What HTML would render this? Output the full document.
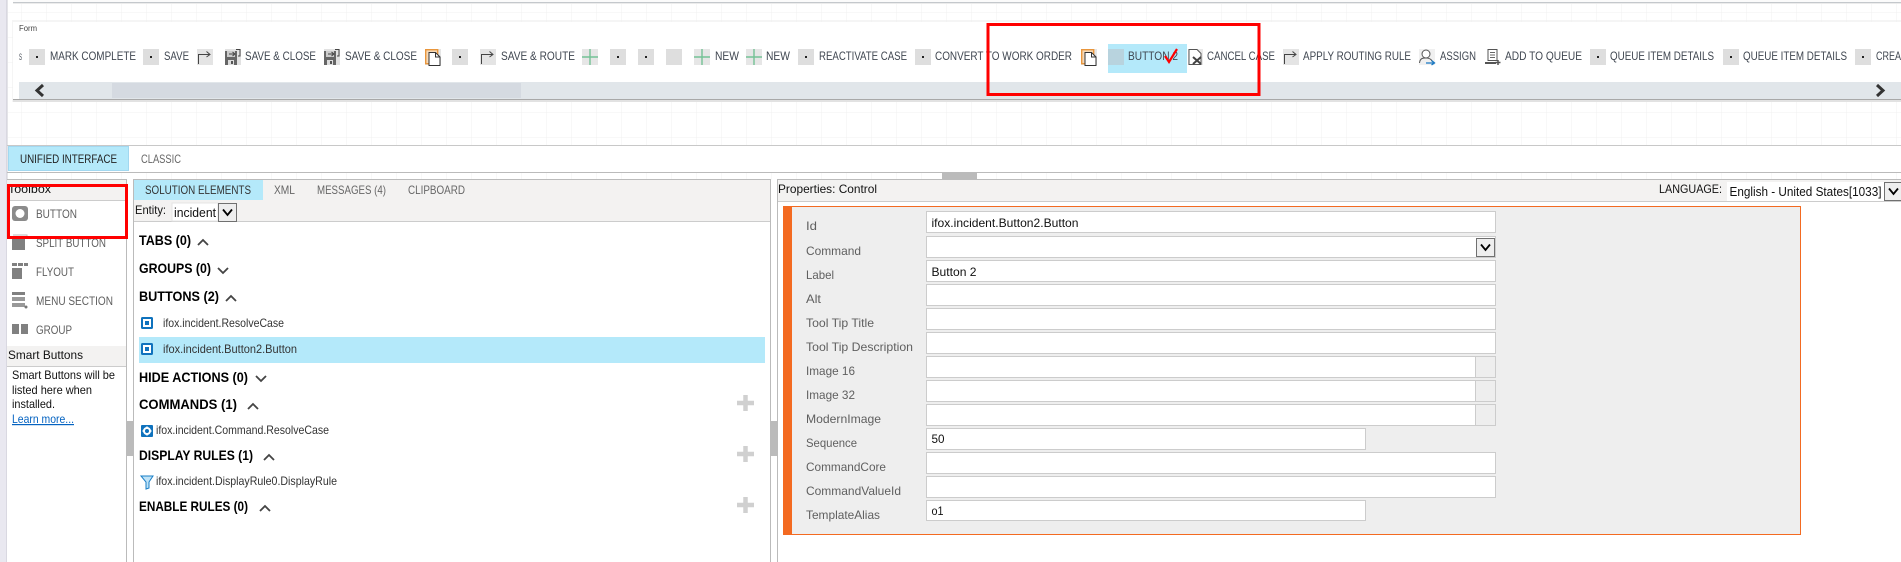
<!DOCTYPE html>
<html><head><meta charset="utf-8"><style>
html,body{margin:0;padding:0;background:#fff;width:1901px;height:562px;overflow:hidden}
svg{display:block}
text{font-family:"Liberation Sans",sans-serif;font-size:12px;fill:#444}
.t text,text.t{fill:#3f4650}
.g{fill:#5f5f5f}
.k{fill:#111}
.h{font-weight:bold;font-size:14px;fill:#000}
.in{fill:#fff;stroke:#ccc;stroke-width:1}
.chev{fill:none;stroke:#444;stroke-width:1.8}
</style></head><body>
<svg width="1901" height="562" viewBox="0 0 1901 562" xmlns="http://www.w3.org/2000/svg" shape-rendering="geometricPrecision">
<defs>
<pattern id="grid" x="21" y="12" width="25" height="25" patternUnits="userSpaceOnUse"><path d="M0 0V25M0 0H25" stroke="#f1f1f1" stroke-width="1" fill="none"/></pattern>
<g id="sq"><rect width="16" height="16" fill="#dedede"/><rect x="7" y="7" width="2" height="2" fill="#222"/></g>
<g id="route"><rect width="16" height="16" fill="#e4e4e4"/><path d="M1.5 15V5.5H12M9.5 2.5L13 5.5L9.5 8" fill="none" stroke="#444" stroke-width="1"/></g>
<g id="save"><rect width="16" height="16" fill="#e2e2e2"/><rect y="2" width="12" height="14" fill="#666"/><rect x="3" y="11" width="6" height="5" fill="#ddd"/><rect x="6" y="12" width="2" height="3" fill="#555"/><rect x="2" y="2" width="8" height="6" fill="#ccc"/><path d="M4 5H9M7.5 3L10 5L7.5 7M11 0.5H15V7H13" fill="none" stroke="#444" stroke-width="1"/></g>
<g id="copy"><rect width="16" height="16" fill="#e6e6e6"/><rect x=".7" y=".7" width="12" height="14" fill="#f6d9b8" stroke="#e9963c" stroke-width="1.4"/><path d="M4 3.500H10.500L15 8V16.500H4Z" fill="#fff" stroke="#333" stroke-width="1"/><path d="M10.500 3.500V8H15" fill="none" stroke="#333" stroke-width="1"/></g>
<g id="plus"><rect width="16" height="16" fill="#e6e6e6"/><path d="M8 0V16M0 8H16" stroke="#74c295" stroke-width="1.4"/></g>
<g id="blue"><rect width="12" height="12" rx="1.5" fill="#0f72bd"/><rect x="2" y="2" width="8" height="8" fill="#fff"/><rect x="4" y="4" width="4" height="4" fill="#0f72bd"/></g>
<g id="sel"><rect width="18" height="18" fill="#eee" stroke="#707070"/><path d="M4.5 6L9 11.5L13.5 6" fill="none" stroke="#000" stroke-width="1.8"/></g>
<g id="bigplus"><path d="M8.5 0V16M0 8H17" stroke="#d0d0d0" stroke-width="4.5"/></g>
</defs>

<rect x="7" width="1894" height="172" fill="#fff"/>
<rect x="8" width="1893" height="145" fill="url(#grid)"/>
<rect x="8" y="172" width="1893" height="8" fill="url(#grid)"/>
<rect width="7" height="562" fill="#e9e8f0"/>
<rect x="6.500" width="1" height="562" fill="#c9c9d2"/>

<!-- top panel remnant -->
<rect x="13" y="0" width="1888" height="2" fill="#fbfbfb"/>
<rect x="13" y="2" width="1888" height="1" fill="#c4c8cc"/>
<rect x="13" y="3" width="1888" height="1" fill="#ececec"/>

<!-- form panel -->
<rect x="12" y="20" width="1889" height="82" fill="#eee" opacity=".6"/>
<rect x="13" y="22" width="1888" height="77" fill="#fff"/>
<rect x="13" y="99" width="1888" height="1" fill="#a8a8a8"/>
<rect x="13" y="100" width="1888" height="2" fill="#e2e2e2"/>
<text x="19" y="31" style="font-size:8px" textLength="18" lengthAdjust="spacingAndGlyphs">Form</text>
<rect x="19" y="82" width="1882" height="17" fill="#e1e6ea"/>
<rect x="112" y="83" width="409" height="15" fill="#d5dae1"/>
<path d="M43 85L37 90.500L43 96" fill="none" stroke="#333" stroke-width="3"/>
<path d="M1877 85L1883 90.500L1877 96" fill="none" stroke="#333" stroke-width="3"/>

<g class="t">
<text x="19" y="60" textLength="3" lengthAdjust="spacingAndGlyphs" style="font-size:9px">S</text>
<use href="#sq" x="29" y="49"/><text x="50" y="60" textLength="86" lengthAdjust="spacingAndGlyphs">MARK COMPLETE</text>
<use href="#sq" x="143" y="49"/><text x="164" y="60" textLength="25" lengthAdjust="spacingAndGlyphs">SAVE</text>
<use href="#route" x="197" y="49"/>
<use href="#save" x="225" y="49"/><text x="245" y="60" textLength="71" lengthAdjust="spacingAndGlyphs">SAVE &amp; CLOSE</text>
<use href="#save" x="324" y="49"/><text x="345" y="60" textLength="72" lengthAdjust="spacingAndGlyphs">SAVE &amp; CLOSE</text>
<use href="#copy" x="425" y="49"/>
<use href="#sq" x="452" y="49"/>
<use href="#route" x="480" y="49"/><text x="501" y="60" textLength="74" lengthAdjust="spacingAndGlyphs">SAVE &amp; ROUTE</text>
<use href="#plus" x="582" y="49"/>
<use href="#sq" x="610" y="49"/>
<use href="#sq" x="638" y="49"/>
<rect x="666" y="49" width="16" height="16" fill="#dedede"/>
<use href="#plus" x="694" y="49"/><text x="715" y="60" textLength="24" lengthAdjust="spacingAndGlyphs">NEW</text>
<use href="#plus" x="746" y="49"/><text x="766" y="60" textLength="24" lengthAdjust="spacingAndGlyphs">NEW</text>
<use href="#sq" x="798" y="49"/><text x="819" y="60" textLength="88" lengthAdjust="spacingAndGlyphs">REACTIVATE CASE</text>
<use href="#sq" x="915" y="49"/><text x="935" y="60" textLength="137" lengthAdjust="spacingAndGlyphs">CONVERT TO WORK ORDER</text>
<use href="#copy" x="1081" y="49"/>
<rect x="1108" y="44" width="79" height="29" fill="#b4e9fa"/>
<rect x="1108" y="49" width="16" height="16" fill="#b8d3de"/>
<text x="1128" y="60" textLength="50" lengthAdjust="spacingAndGlyphs">BUTTON 2</text>
<path d="M1165 56L1169 62L1177 49" fill="none" stroke="#f00" stroke-width="2.200"/>
<g transform="translate(1188,49)"><rect width="15" height="16" fill="#e8e8e8"/><path d="M1 .5H9L13 4.500V15.500H1Z" fill="#fff" stroke="#555"/><path d="M5 8L13 15M13 8L5 15" stroke="#444" stroke-width="2"/></g>
<text x="1207" y="60" textLength="68" lengthAdjust="spacingAndGlyphs">CANCEL CASE</text>
<use href="#route" x="1283" y="49"/><text x="1303" y="60" textLength="108" lengthAdjust="spacingAndGlyphs">APPLY ROUTING RULE</text>
<g transform="translate(1419,49)"><rect width="16" height="16" fill="#f0f0f0"/><circle cx="7" cy="5" r="4" fill="#fff" stroke="#555"/><path d="M.5 14C1 9 4 9 7 9S12 10 13 12" fill="none" stroke="#555"/><path d="M7 14H15M12.500 11.500L15.500 14L12.500 16" fill="none" stroke="#1a78c2" stroke-width="1.300"/></g>
<text x="1440" y="60" textLength="36" lengthAdjust="spacingAndGlyphs">ASSIGN</text>
<g transform="translate(1485,49)"><rect x="3" y=".5" width="9" height="11" fill="#fff" stroke="#555"/><path d="M5 3.500H10M5 6H10M5 8.500H10" stroke="#666"/><rect y="13" width="11" height="2" fill="#555"/><path d="M13 11V16M10.500 13.500H15.500" stroke="#555" stroke-width="1.500"/></g>
<text x="1505" y="60" textLength="77" lengthAdjust="spacingAndGlyphs">ADD TO QUEUE</text>
<use href="#sq" x="1590" y="49"/><text x="1610" y="60" textLength="104" lengthAdjust="spacingAndGlyphs">QUEUE ITEM DETAILS</text>
<use href="#sq" x="1723" y="49"/><text x="1743" y="60" textLength="104" lengthAdjust="spacingAndGlyphs">QUEUE ITEM DETAILS</text>
<use href="#sq" x="1855" y="49"/><text x="1876" y="60" textLength="25" lengthAdjust="spacingAndGlyphs">CREA</text>
</g>
<rect x="988" y="24.500" width="271" height="70" fill="none" stroke="#f00" stroke-width="3"/>

<!-- tabs -->
<rect x="7" y="145" width="1894" height="1" fill="#c8c8c8"/>
<rect x="8" y="146" width="1893" height="26" fill="#fff"/>
<rect x="8.500" y="146.500" width="120" height="24" fill="#b4e9fa" stroke="#a2d8f0"/>
<text x="20" y="163" style="fill:#222" textLength="97" lengthAdjust="spacingAndGlyphs">UNIFIED INTERFACE</text>
<text x="141" y="163" style="fill:#666" textLength="40" lengthAdjust="spacingAndGlyphs">CLASSIC</text>
<rect x="7" y="172" width="1894" height="1" fill="#bbb"/>
<rect x="942" y="173" width="35" height="7" fill="#bbb"/>

<!-- toolbox panel -->
<rect x="7" y="180" width="120" height="382" fill="#fff"/>
<rect x="7" y="180" width="120" height="20" fill="#f3f2f1"/>
<rect x="7" y="179" width="120" height="1" fill="#bbb"/>
<rect x="7" y="200" width="120" height="1" fill="#ccc"/>
<rect x="126" y="179" width="1" height="383" fill="#bbb"/>
<text x="8" y="193" class="k" textLength="43" lengthAdjust="spacingAndGlyphs">Toolbox</text>
<rect x="12" y="206" width="16" height="15" rx="3" fill="#8b8b8b"/><circle cx="20" cy="213.500" r="4.500" fill="#fff"/>
<text x="36" y="218" class="g" textLength="41" lengthAdjust="spacingAndGlyphs">BUTTON</text>
<path d="M13 235H27V239" fill="none" stroke="#bbb"/><rect x="12" y="238" width="13" height="12" fill="#808080"/>
<text x="36" y="247" class="g" textLength="70" lengthAdjust="spacingAndGlyphs">SPLIT BUTTON</text>
<rect x="12" y="263" width="5" height="3" fill="#808080"/><rect x="18" y="263" width="5" height="3" fill="#808080"/><rect x="24" y="263" width="4" height="3" fill="#808080"/><rect x="12" y="268" width="10" height="11" fill="#808080"/>
<text x="36" y="276" class="g" textLength="38" lengthAdjust="spacingAndGlyphs">FLYOUT</text>
<rect x="12" y="292" width="13" height="3" fill="#808080"/><rect x="12" y="297" width="13" height="4" fill="#999"/><rect x="12" y="303" width="13" height="4" fill="#999"/><circle cx="26" cy="307" r="1.500" fill="#777"/>
<text x="36" y="305" class="g" textLength="77" lengthAdjust="spacingAndGlyphs">MENU SECTION</text>
<rect x="12" y="324" width="7" height="10" fill="#808080"/><rect x="21" y="324" width="7" height="10" fill="#808080"/>
<text x="36" y="334" class="g" textLength="36" lengthAdjust="spacingAndGlyphs">GROUP</text>
<rect x="7" y="346" width="119" height="20" fill="#f3f2f1"/>
<rect x="7" y="366" width="119" height="1" fill="#ccc"/>
<text x="8" y="359" class="k" textLength="75" lengthAdjust="spacingAndGlyphs">Smart Buttons</text>
<text x="12" y="379" class="k" textLength="103" lengthAdjust="spacingAndGlyphs">Smart Buttons will be</text>
<text x="12" y="394" class="k" textLength="80" lengthAdjust="spacingAndGlyphs">listed here when</text>
<text x="12" y="408" class="k" textLength="43" lengthAdjust="spacingAndGlyphs">installed.</text>
<text x="12" y="423" style="fill:#0563c1;text-decoration:underline" textLength="62" lengthAdjust="spacingAndGlyphs">Learn more...</text>
<rect x="8.500" y="185.500" width="118" height="52" fill="none" stroke="#f00" stroke-width="3"/>
<rect x="126" y="421" width="7" height="35" fill="#bbb"/>

<!-- middle panel -->
<rect x="133" y="179" width="638" height="383" fill="#fff"/>
<rect x="133" y="180" width="638" height="41" fill="#f3f2f1"/>
<rect x="133" y="179" width="638" height="1" fill="#bbb"/>
<rect x="133" y="179" width="1" height="383" fill="#bbb"/>
<rect x="770" y="179" width="1" height="383" fill="#bbb"/>
<rect x="134" y="221" width="636" height="1" fill="#ccc"/>
<rect x="134" y="180" width="129" height="20" fill="#b4e9fa"/>
<text x="145" y="194" style="fill:#333" textLength="106" lengthAdjust="spacingAndGlyphs">SOLUTION ELEMENTS</text>
<text x="274" y="194" style="fill:#666" textLength="21" lengthAdjust="spacingAndGlyphs">XML</text>
<text x="317" y="194" style="fill:#666" textLength="69" lengthAdjust="spacingAndGlyphs">MESSAGES (4)</text>
<text x="408" y="194" style="fill:#666" textLength="57" lengthAdjust="spacingAndGlyphs">CLIPBOARD</text>
<text x="135" y="214" class="k" textLength="31" lengthAdjust="spacingAndGlyphs">Entity:</text>
<rect x="172" y="203" width="46" height="18" fill="#fff" stroke="#e4e4e4"/>
<text x="174" y="217" class="k" style="font-size:13px" textLength="42" lengthAdjust="spacingAndGlyphs">incident</text>
<use href="#sel" x="218.500" y="203.500"/>

<text x="139" y="245" class="h" textLength="52" lengthAdjust="spacingAndGlyphs">TABS (0)</text>
<path class="chev" d="M198 245L203 240L208 245"/>
<text x="139" y="273" class="h" textLength="72" lengthAdjust="spacingAndGlyphs">GROUPS (0)</text>
<path class="chev" d="M218 268L223 273L228 268"/>
<text x="139" y="301" class="h" textLength="80" lengthAdjust="spacingAndGlyphs">BUTTONS (2)</text>
<path class="chev" d="M226 301L231 296L236 301"/>
<use href="#blue" x="141" y="317"/>
<text x="163" y="327" style="fill:#333" textLength="121" lengthAdjust="spacingAndGlyphs">ifox.incident.ResolveCase</text>
<rect x="139" y="337" width="626" height="26" fill="#b4e9fa"/>
<use href="#blue" x="141" y="343"/>
<text x="163" y="353" style="fill:#333" textLength="134" lengthAdjust="spacingAndGlyphs">ifox.incident.Button2.Button</text>
<text x="139" y="382" class="h" textLength="109" lengthAdjust="spacingAndGlyphs">HIDE ACTIONS (0)</text>
<path class="chev" d="M256 376L261 381L266 376"/>
<text x="139" y="409" class="h" textLength="98" lengthAdjust="spacingAndGlyphs">COMMANDS (1)</text>
<path class="chev" d="M248 409L253 404L258 409"/>
<use href="#bigplus" x="737" y="395"/>
<g transform="translate(141,425)"><rect width="12" height="12" rx="1" fill="#0f72bd"/><circle cx="6" cy="6" r="3" fill="none" stroke="#fff" stroke-width="2"/><path d="M6 1.500V3M6 9V10.500M1.500 6H3M9 6H10.500" stroke="#fff" stroke-width="1.500"/></g>
<text x="156" y="434" style="fill:#333" textLength="173" lengthAdjust="spacingAndGlyphs">ifox.incident.Command.ResolveCase</text>
<text x="139" y="460" class="h" textLength="114" lengthAdjust="spacingAndGlyphs">DISPLAY RULES (1)</text>
<path class="chev" d="M264 460L269 455L274 460"/>
<use href="#bigplus" x="737" y="446"/>
<path d="M141 476H153L149 482V488L146 489V482Z" fill="#bfe3f7" stroke="#1a7fc7" stroke-width="1"/>
<text x="156" y="485" style="fill:#333" textLength="181" lengthAdjust="spacingAndGlyphs">ifox.incident.DisplayRule0.DisplayRule</text>
<text x="139" y="511" class="h" textLength="109" lengthAdjust="spacingAndGlyphs">ENABLE RULES (0)</text>
<path class="chev" d="M260 511L265 506L270 511"/>
<use href="#bigplus" x="737" y="497"/>
<rect x="771" y="421" width="7" height="35" fill="#bbb"/>

<!-- right panel -->
<rect x="778" y="179" width="1123" height="383" fill="#fff"/>
<rect x="778" y="180" width="1123" height="21" fill="#f3f2f1"/>
<rect x="777" y="179" width="1124" height="1" fill="#bbb"/>
<rect x="777" y="179" width="1" height="383" fill="#bbb"/>
<rect x="778" y="201" width="1123" height="1" fill="#ccc"/>
<text x="778" y="193" class="k" textLength="99" lengthAdjust="spacingAndGlyphs">Properties: Control</text>
<text x="1659" y="193" class="k" textLength="63" lengthAdjust="spacingAndGlyphs">LANGUAGE:</text>
<rect x="1727" y="182" width="157" height="19" fill="#fff"/>
<text x="1729.500" y="196" class="k" style="font-size:13px" textLength="152" lengthAdjust="spacingAndGlyphs">English - United States[1033]</text>
<use href="#sel" x="1884.500" y="182.500"/>

<rect x="783.500" y="206.500" width="1017" height="328" fill="#eee" stroke="#f36a21"/>
<rect x="783" y="206" width="9" height="329" fill="#f36a21"/>

<g>
<text x="806" y="230" class="g" textLength="11" lengthAdjust="spacingAndGlyphs">Id</text>
<text x="806" y="255" class="g" textLength="55" lengthAdjust="spacingAndGlyphs">Command</text>
<text x="806" y="279" class="g" textLength="28" lengthAdjust="spacingAndGlyphs">Label</text>
<text x="806" y="303" class="g" textLength="15" lengthAdjust="spacingAndGlyphs">Alt</text>
<text x="806" y="327" class="g" textLength="68" lengthAdjust="spacingAndGlyphs">Tool Tip Title</text>
<text x="806" y="351" class="g" textLength="107" lengthAdjust="spacingAndGlyphs">Tool Tip Description</text>
<text x="806" y="375" class="g" textLength="49" lengthAdjust="spacingAndGlyphs">Image 16</text>
<text x="806" y="399" class="g" textLength="49" lengthAdjust="spacingAndGlyphs">Image 32</text>
<text x="806" y="423" class="g" textLength="75" lengthAdjust="spacingAndGlyphs">ModernImage</text>
<text x="806" y="447" class="g" textLength="51" lengthAdjust="spacingAndGlyphs">Sequence</text>
<text x="806" y="471" class="g" textLength="80" lengthAdjust="spacingAndGlyphs">CommandCore</text>
<text x="806" y="495" class="g" textLength="95" lengthAdjust="spacingAndGlyphs">CommandValueId</text>
<text x="806" y="519" class="g" textLength="74" lengthAdjust="spacingAndGlyphs">TemplateAlias</text>
</g>
<rect class="in" x="926.500" y="211.500" width="569" height="21"/>
<rect class="in" x="926.500" y="236.500" width="569" height="21"/>
<rect class="in" x="926.500" y="260.500" width="569" height="21"/>
<rect class="in" x="926.500" y="284.500" width="569" height="21"/>
<rect class="in" x="926.500" y="308.500" width="569" height="21"/>
<rect class="in" x="926.500" y="332.500" width="569" height="21"/>
<rect class="in" x="926.500" y="356.500" width="569" height="21"/>
<rect class="in" x="926.500" y="380.500" width="569" height="21"/>
<rect class="in" x="926.500" y="404.500" width="569" height="21"/>
<rect class="in" x="926.500" y="428.500" width="439" height="21"/>
<rect class="in" x="926.500" y="452.500" width="569" height="21"/>
<rect class="in" x="926.500" y="476.500" width="569" height="21"/>
<rect class="in" x="926.500" y="500.500" width="439" height="20"/>
<rect x="1475.500" y="356.500" width="20" height="21" fill="#eee" stroke="#ccc"/>
<rect x="1475.500" y="380.500" width="20" height="21" fill="#eee" stroke="#ccc"/>
<rect x="1475.500" y="404.500" width="20" height="21" fill="#eee" stroke="#ccc"/>
<use href="#sel" x="1476.500" y="238.500"/>
<text x="931.500" y="227" class="k" textLength="147" lengthAdjust="spacingAndGlyphs">ifox.incident.Button2.Button</text>
<text x="931.500" y="276" class="k" textLength="45" lengthAdjust="spacingAndGlyphs">Button 2</text>
<text x="931.500" y="443" class="k" textLength="13" lengthAdjust="spacingAndGlyphs">50</text>
<text x="931.500" y="515" class="k" textLength="12" lengthAdjust="spacingAndGlyphs">o1</text>
</svg>
</body></html>
